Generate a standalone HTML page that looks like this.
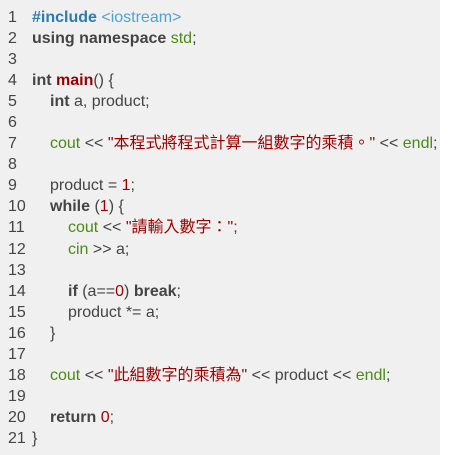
<!DOCTYPE html>
<html><head><meta charset="utf-8"><style>
body{margin:0;background:#fff;}
.c{position:absolute;left:0;top:0;width:440px;height:455px;background:#f0f0f0;}
.w{position:absolute;top:7px;left:0;font-family:"Liberation Sans","Noto Sans CJK TC",sans-serif;font-size:16px;line-height:21.05px;color:#444;}
.l{white-space:pre;height:21.05px;}
.n{display:inline-block;width:32px;padding-left:8px;box-sizing:border-box;color:#444;}
.k{font-weight:bold;color:#444}
.p{font-weight:bold;color:#2b7cad}
.h{color:#4fa3d2}
.g{color:#4b8a17}
.r{color:#990000}
.f{color:#990000;font-weight:bold}
.i1{padding-left:18px}.i2{padding-left:36px}
</style></head><body><div class="c"></div><div class="w"><div class="l"><span class="n">1</span><span class="p">#include</span> <span class="h">&lt;iostream&gt;</span></div><div class="l"><span class="n">2</span><span class="k">using namespace</span> <span class="g">std</span>;</div><div class="l"><span class="n">3</span></div><div class="l"><span class="n">4</span><span class="k">int</span> <span class="f">main</span>() {</div><div class="l"><span class="n">5</span><span class="i1"><span class="k">int</span> a, product;</span></div><div class="l"><span class="n">6</span></div><div class="l"><span class="n">7</span><span class="i1"><span class="g">cout</span> &lt;&lt; <span class="r">"本程式將程式計算一組數字的乘積。"</span> &lt;&lt; <span class="g">endl</span>;</span></div><div class="l"><span class="n">8</span></div><div class="l"><span class="n">9</span><span class="i1">product = <span class="r">1</span>;</span></div><div class="l"><span class="n">10</span><span class="i1"><span class="k">while</span> (<span class="r">1</span>) {</span></div><div class="l"><span class="n">11</span><span class="i2"><span class="g">cout</span> &lt;&lt; <span class="r">"請輸入數字："</span>;</span></div><div class="l"><span class="n">12</span><span class="i2"><span class="g">cin</span> &gt;&gt; a;</span></div><div class="l"><span class="n">13</span></div><div class="l"><span class="n">14</span><span class="i2"><span class="k">if</span> (a==<span class="r">0</span>) <span class="k">break</span>;</span></div><div class="l"><span class="n">15</span><span class="i2">product *= a;</span></div><div class="l"><span class="n">16</span><span class="i1">}</span></div><div class="l"><span class="n">17</span></div><div class="l"><span class="n">18</span><span class="i1"><span class="g">cout</span> &lt;&lt; <span class="r">"此組數字的乘積為"</span> &lt;&lt; product &lt;&lt; <span class="g">endl</span>;</span></div><div class="l"><span class="n">19</span></div><div class="l"><span class="n">20</span><span class="i1"><span class="k">return</span> <span class="r">0</span>;</span></div><div class="l"><span class="n">21</span>}</div></div></body></html>
